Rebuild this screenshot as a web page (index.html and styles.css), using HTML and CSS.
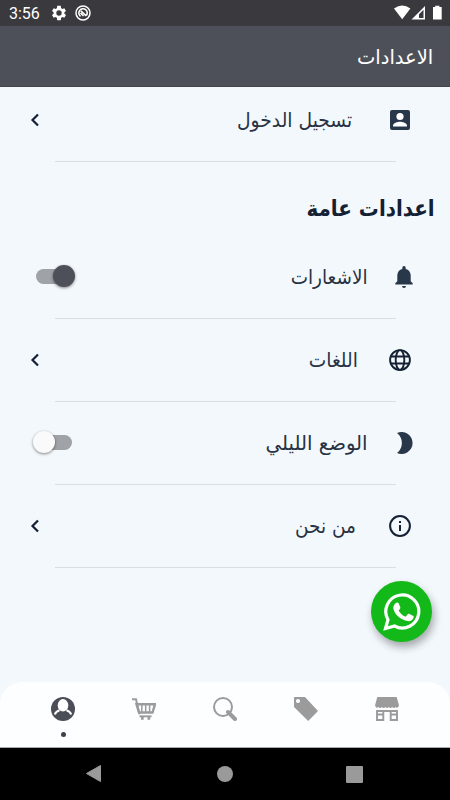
FILE: index.html
```html
<!DOCTYPE html>
<html lang="ar" dir="rtl">
<head>
<meta charset="utf-8">
<title>الاعدادات</title>
<link rel="stylesheet" href="styles.css">
</head>
<body>
<div class="status" dir="ltr">
  <span class="clock">3:56</span>
  <svg class="gear" width="16" height="16" viewBox="1 1 22 22"><path fill="#fff" fill-rule="evenodd" d="M19.4 13a7.5 7.5 0 0 0 0-2l2.2-1.700-2.300-4-2.600 1.100a8 8 0 0 0-1.800-1L14.500 2h-5l-.4 3.400a8 8 0 0 0-1.800 1L4.700 5.300l-2.300 4L4.600 11a7.500 7.500 0 0 0 0 2l-2.200 1.700 2.300 4 2.600-1.100a8 8 0 0 0 1.800 1l.4 3.400h5l.4-3.400a8 8 0 0 0 1.800-1l2.600 1.100 2.300-4zM12 15.700a3.700 3.700 0 1 1 0-7.400 3.700 3.700 0 0 1 0 7.400z"/></svg>
  <svg class="ring" width="16" height="16" viewBox="0 0 16 16" fill="none" stroke="#fff"><circle cx="8" cy="8" r="7" stroke-width="1.500"/><path d="M5.500 11.300A4.200 4.200 0 1 1 11.300 10.600" stroke-width="1.600"/><path d="M5.800 5.800l5.400 5M5.500 8l3 3" stroke-width="1.600"/></svg>
  <span class="grow"></span>
  <svg width="48" height="16" viewBox="0 0 48 16" fill="#fff"><path d="M0 3.600Q8.200-2.800 16.400 3.600L8.200 14.300z"/><path fill-rule="evenodd" d="M17.500 14.500L31 1v13.500zM25 9.200v3.800h4.500V4.700z"/><path d="M39 2h2.200V.7h4.200V2h2.300v12.600H39z"/></svg>
</div>
<header class="bar"><h1 class="t-title">الاعدادات</h1></header>
<main>
  <section class="row first">
    <span class="icon"><svg width="24" height="24" viewBox="0 0 24 24"><rect x="2" y="2" width="20" height="20" rx="2" fill="#28384a"/><circle cx="12" cy="8.500" r="3.600" fill="#fff"/><path d="M5 18.500v-1c0-2.500 4.500-3.800 7-3.800s7 1.300 7 3.800v1z" fill="#fff"/></svg></span>
    <span class="label t-login">تسجيل الدخول</span>
    <svg class="chev" width="10" height="14" viewBox="0 0 10 14"><path d="M8 1.500L2.500 7 8 12.500"/></svg>
  </section>
  <h2><span class="t-general">اعدادات عامة</span></h2>
  <section class="row">
    <span class="icon shift"><svg width="24" height="24" viewBox="0 0 24 24" fill="#28384a"><path d="M3.300 19.500v-1.200L5.300 16.200v-5.700c0-3.400 1.900-5.800 5-6.500v-1.300a1.700 1.700 0 0 1 3.400 0V4c3.100.7 5 3.100 5 6.500v5.700l2 2.100v1.200zM10 21h4a2 2 0 0 1-4 0z"/></svg></span>
    <span class="label t-alerts">الاشعارات</span>
    <span class="switch on"><i></i></span>
  </section>
  <section class="row">
    <span class="icon"><svg width="24" height="24" viewBox="0 0 24 24" fill="none" stroke="#142033" stroke-width="1.900"><circle cx="12" cy="12" r="9.900"/><ellipse cx="12" cy="12" rx="4.300" ry="9.900"/><path d="M3 8.500h18M3 15.500h18"/></svg></span>
    <span class="label t-lang">اللغات</span>
    <svg class="chev" width="10" height="14" viewBox="0 0 10 14"><path d="M8 1.500L2.500 7 8 12.500"/></svg>
  </section>
  <section class="row">
    <span class="icon shift"><svg width="24" height="24" viewBox="0 0 24 24"><path fill="#28384a" d="M5 2a11 11 0 1 1 0 20C11.500 17.500 11.500 6.500 5 2z"/></svg></span>
    <span class="label t-night">الوضع الليلي</span>
    <span class="switch off"><i></i></span>
  </section>
  <section class="row">
    <span class="icon"><svg width="24" height="24" viewBox="0 0 24 24" fill="none" stroke="#142033" stroke-width="2"><circle cx="12" cy="12" r="9.900"/><path d="M12 11v6M12 7v2"/></svg></span>
    <span class="label t-about">من نحن</span>
    <svg class="chev" width="10" height="14" viewBox="0 0 10 14"><path d="M8 1.500L2.500 7 8 12.500"/></svg>
  </section>
  <a class="whatsapp"><svg width="38" height="38" viewBox="0 0 38 38"><path d="M2.500 35.500l2.500-8.800A16.500 16.500 0 1 1 11.500 33z" fill="none" stroke="#fff" stroke-width="3.200"/><path fill="#fff" d="M12.800 10c.7-.7 2.300-.7 2.800.3l1.700 3.900c.3.900-.2 1.600-1.700 3.200 1.700 3.100 3.900 5 7 6.300l2.100-2.500c.5-.6 1-.6 1.700-.3l3.600 1.800c.8.400.8.900.6 1.800-.6 2.700-3.700 4.100-6.300 3.500-7.400-1.700-12.100-6.400-13.800-11.800-.7-2.200.5-4.600 2.300-6.200z"/></svg></a>
</main>
<nav class="tabs" dir="ltr">
  <span class="tab"><svg width="24" height="24" viewBox="0 0 24 24"><circle cx="12" cy="12" r="12" fill="#4b4d57"/><ellipse cx="12" cy="8.300" rx="5.300" ry="6.200" fill="#fff"/><path d="M8.500 13.200C6.500 14 4.300 15 3.900 17.500M15.500 13.200c2 .8 4.200 1.800 4.600 4.300" fill="none" stroke="#fff" stroke-width="2"/></svg><b></b></span>
  <span class="tab"><svg width="24" height="24" viewBox="0 0 24 24" fill="none" stroke="#9b9b9b"><path d="M0 2.200h4l3.500 15" stroke-width="2"/><path d="M4.500 7.300h18.500L20.500 15.500H7z" stroke-width="2.400"/><path d="M9.800 8v8M13.700 8v8M17.600 8v8" stroke-width="1.500"/><path d="M7.500 19.300h12" stroke-width="1.900"/><path d="M9 21.300h2.700M15.500 21.300h2.700" stroke-width="3"/></svg></span>
  <span class="tab"><svg width="24" height="24" viewBox="0 0 24 24" fill="none" stroke="#9b9b9b" stroke-linecap="round"><circle cx="10" cy="10" r="9" stroke-width="2"/><path d="M15 15l7 7" stroke-width="4"/></svg></span>
  <span class="tab"><svg width="24" height="24" viewBox="0 0 24 24"><path fill="#9b9b9b" fill-rule="evenodd" d="M1 0h10l13 14-9.800 10L0 10V1a1 1 0 0 1 1-1zM4 1.900a2.100 2.100 0 1 0 0 4.200 2.100 2.100 0 0 0 0-4.200z"/></svg></span>
  <span class="tab"><svg width="24" height="24" viewBox="0 0 24 24"><path fill="#9b9b9b" d="M2.300 0h19.400L24 8.500q-1.500 3.500-3.400 1.400-1.700 2.200-3.400 0-1.700 2.200-3.500 0-1.700 2.200-3.400 0-1.700 2.200-3.400 0-1.700 2.200-3.500 0Q1.500 12 0 8.500z"/><path d="M2 23V14h20v9M8.300 14v10M15.700 14v10M1 23h8M15 23h8M2 17.500h6M16 17.500h6" fill="none" stroke="#9b9b9b" stroke-width="1.900"/></svg></span>
</nav>
<footer class="system" dir="ltr">
  <svg width="18" height="20" viewBox="0 0 18 20"><path d="M15.500 1.500v16L1.500 9.500z" fill="#9a9a9a" stroke="#9a9a9a" stroke-linejoin="round"/></svg>
  <span class="home"></span><span class="recent"></span>
</footer>
</body>
</html>
```
FILE: styles.css
```css
* { box-sizing: border-box; }
body { margin: 0; width: 450px; height: 800px; overflow: hidden; display: flex; flex-direction: column; background: #f3f8fd; color: #142033; font-family: "DejaVu Sans", sans-serif; }
svg { display: block; flex: none; }
h1, h2 { margin: 0; }
.status { height: 26px; background: #3a3a3e; display: flex; align-items: center; padding: 0 8px 0 9px; color: #fff; }
.clock { font: 16px/26px Roboto, sans-serif; width: 42px; padding-top: 1px; }
.ring { margin-left: 8px; }
.grow { flex: 1; }
.bar { height: 61px; background: #4d5059; border-bottom: 1px solid #43454c; display: flex; align-items: center; padding: 2px 17px 0 0; color: #fff; }
.bar h1 { font-size: 20px; font-weight: 400; line-height: 30px; transform-origin: right; }
main { flex: 1; position: relative; }
.row { height: 83px; display: flex; align-items: center; margin: 0 0 0 30px; padding: 0 38px 2px 0; position: relative; }
.row::after { content: ""; position: absolute; left: 25px; right: 54px; bottom: 0; height: 1px; background: #d8dfe4; }
.row.first { margin-top: -8px; }
.icon { width: 24px; flex: none; }
.icon.shift { margin-right: -4px; margin-left: 4px; }
.label { font-size: 20px; line-height: 30px; white-space: nowrap; transform-origin: right; margin-left: auto; color: #273243; }
.t-title { transform: scaleX(.975); }
.t-login { margin-right: 36px; transform: scaleX(.935); }
.t-alerts, .t-night { margin-right: 20px; }
.t-alerts { transform: scaleX(.92); }
.t-night { transform: scaleX(.985); }
.t-lang { margin-right: 30px; transform: scaleX(.93); }
.t-about { margin-right: 32px; transform: scaleX(.925); }
h2 { height: 74px; padding: 31px 15px 0 0; font-size: 22px; line-height: 32px; }
h2 span { display: inline-block; transform-origin: right; transform: scaleX(.905); }
.chev { fill: none; stroke: #142033; stroke-width: 2.2; }
.switch { width: 38px; height: 15px; border-radius: 8px; background: #9fa2a7; position: relative; }
.switch i { position: absolute; top: -4px; width: 22px; height: 22px; border-radius: 50%; box-shadow: 0 1px 3px #0007; }
.on { margin-left: 6px; }
.on i { right: -1px; background: #4d5059; }
.off { margin-left: 4px; }
.off i { left: -1px; background: #fafafa; }
.whatsapp { position: absolute; left: 371px; top: 494px; width: 61px; height: 61px; border-radius: 50%; background: #12b918; box-shadow: 2px 5px 9px #0005; display: grid; place-items: center; }
.tabs { height: 66px; background: #fdfeff; border-radius: 22px 22px 0 0; border-bottom: 1px solid #aaa; display: flex; justify-content: space-between; padding: 15px 51px 0; }
.tab { width: 24px; display: flex; flex-direction: column; align-items: center; gap: 11px; }
.tab b { width: 5px; height: 5px; border-radius: 50%; background: #3e404b; }
.system { height: 52px; background: #000; display: flex; justify-content: space-between; align-items: center; padding: 0 87px 0 85px; }
.home { width: 16px; height: 16px; border-radius: 50%; background: #9a9a9a; }
.recent { width: 17px; height: 17px; border-radius: 1px; background: #9a9a9a; }
```
